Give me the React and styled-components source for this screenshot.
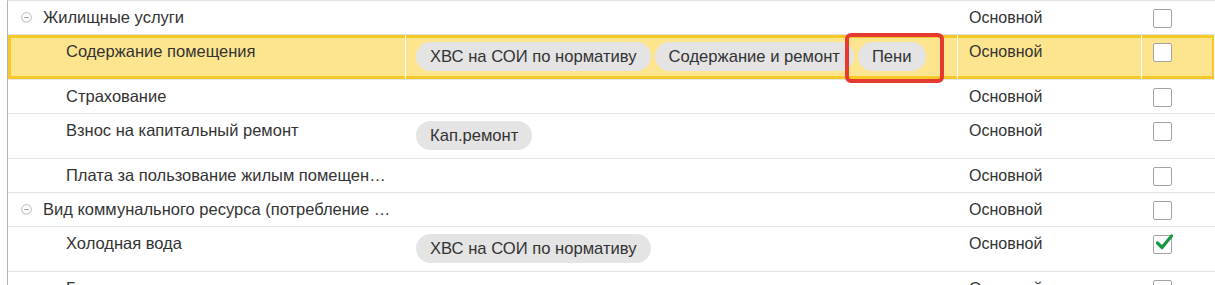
import React from "react";
import styled, { createGlobalStyle } from "styled-components";

const Global = createGlobalStyle`
  html, body { margin: 0; padding: 0; background: #fff; }
  body { font-family: "Liberation Sans", Arial, sans-serif; color: #333; overflow: hidden; }
`;

const Wrapper = styled.div`
  padding-left: 7px;
  background: #fff;
`;

const Table = styled.div`
  border-left: 1px solid #b4b4b4;
  border-top: 1px solid #e3e3e3;
  min-height: 300px;
`;

const Row = styled.div`
  display: grid;
  grid-template-columns: 398px 552px 184px 1fr;
  border-bottom: 1px solid #e3e3e3;
  background: ${(p) => (p.$selected ? "#fde58f" : "#fff")};
  box-shadow: ${(p) => (p.$selected ? "inset 0 0 0 3px #f8c926" : "none")};
  font-size: 16px;
  line-height: 17px;
`;

const Cell = styled.div`
  border-right: 1px solid #fff;
  padding: 8px 0;
  min-width: 0;
  display: flex;
  align-items: flex-start;
`;

const NameCell = styled(Cell)`
  padding-left: ${(p) => (p.$level === 0 ? 13 : 58)}px;
  padding-right: 12px;
  gap: 11px;
  font-size: 16.5px;
`;

const Toggle = styled.svg`
  flex: none;
  width: 11px;
  height: 11px;
  margin-top: 3px;
`;

const NameText = styled.span`
  white-space: nowrap;
  overflow: hidden;
  text-overflow: ellipsis;
  min-width: 0;
`;

const TagsCell = styled(Cell)`
  padding: 7px 0 8px 10px;
  gap: 4px;
  align-items: center;
`;

const Tag = styled.span`
  position: relative;
  display: inline-flex;
  align-items: center;
  height: 29px;
  padding: 0 14px;
  border-radius: 15px;
  background: #e4e4e4;
  color: #333;
  white-space: nowrap;
  font-size: 16.6px;
`;

const Mark = styled.span`
  position: absolute;
  left: -13px;
  right: -18px;
  top: -9px;
  bottom: -12px;
  border: 4px solid #e53a30;
  border-radius: 6px;
  pointer-events: none;
`;

const TypeCell = styled(Cell)`
  padding-left: 11px;
`;

const CheckCell = styled(Cell)`
  padding: 8px 0 0 11px;
`;

const Box = styled.span`
  width: 17px;
  height: 17px;
  border: 1px solid #a3a3a3;
  border-radius: 2px;
  background: #fff;
  display: inline-flex;
  align-items: center;
  justify-content: center;
  position: relative;
`;

const CheckSvg = styled.svg`
  position: absolute;
  left: 1px;
  top: -3px;
  width: 19px;
  height: 18px;
`;

const rows = [
  { level: 0, name: "Жилищные услуги", tags: [], checked: false },
  {
    level: 1,
    name: "Содержание помещения",
    tags: ["ХВС на СОИ по нормативу", "Содержание и ремонт", "Пени"],
    marked: "Пени",
    selected: true,
  },
  { level: 1, name: "Страхование", tags: [] },
  { level: 1, name: "Взнос на капитальный ремонт", tags: ["Кап.ремонт"] },
  { level: 1, name: "Плата за пользование жилым помещением (плата за наём)", tags: [] },
  { level: 0, name: "Вид коммунального ресурса (потребление при содержании общего имущества)", tags: [] },
  { level: 1, name: "Холодная вода", tags: ["ХВС на СОИ по нормативу"], checked: true },
  { level: 1, name: "Горячая вода", tags: [] },
];

function ToggleIcon() {
  return (
    <Toggle viewBox="0 0 11 11">
      <circle cx="5.5" cy="5.5" r="4.8" fill="none" stroke="#b3b3b3" strokeWidth="1" />
      <line x1="3.2" y1="5.5" x2="7.8" y2="5.5" stroke="#9a9a9a" strokeWidth="1" />
    </Toggle>
  );
}

function Checkbox({ checked }) {
  return (
    <Box>
      {checked && (
        <CheckSvg viewBox="0 0 19 18">
          <path d="M2.5 10 L7 14.5 L16.5 3" fill="none" stroke="#17973f" strokeWidth="3.2" strokeLinecap="round" strokeLinejoin="round" />
        </CheckSvg>
      )}
    </Box>
  );
}

export default function App() {
  return (
    <>
      <Global />
      <Wrapper>
        <Table>
          {rows.map((r, i) => (
            <Row key={i} $selected={r.selected}>
              <NameCell $level={r.level}>
                {r.level === 0 && <ToggleIcon />}
                <NameText>{r.name}</NameText>
              </NameCell>
              <TagsCell>
                {r.tags.map((t) => (
                  <Tag key={t}>
                    {t}
                    {r.marked === t && <Mark />}
                  </Tag>
                ))}
              </TagsCell>
              <TypeCell>Основной</TypeCell>
              <CheckCell>
                <Checkbox checked={r.checked} />
              </CheckCell>
            </Row>
          ))}
        </Table>
      </Wrapper>
    </>
  );
}
